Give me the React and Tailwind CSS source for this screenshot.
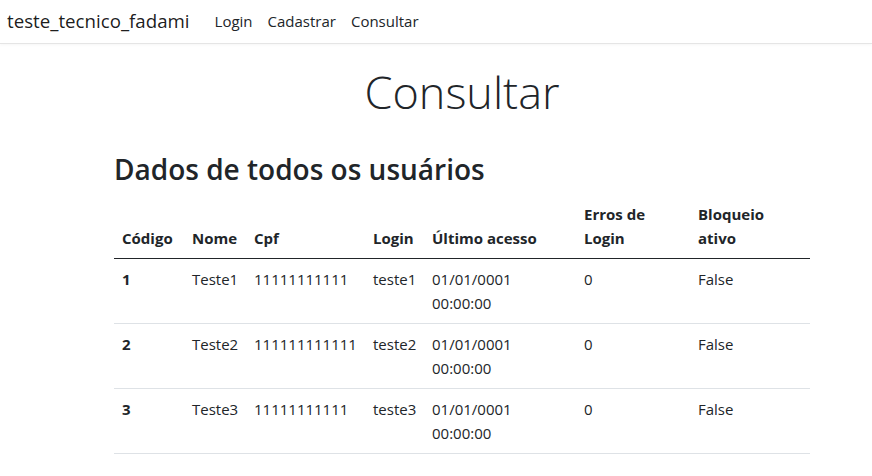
const usuarios = [
  { codigo: 1, nome: 'Teste1', cpf: '11111111111', login: 'teste1', data: '01/01/0001', hora: '00:00:00', erros: 0, bloqueio: 'False' },
  { codigo: 2, nome: 'Teste2', cpf: '111111111111', login: 'teste2', data: '01/01/0001', hora: '00:00:00', erros: 0, bloqueio: 'False' },
  { codigo: 3, nome: 'Teste3', cpf: '11111111111', login: 'teste3', data: '01/01/0001', hora: '00:00:00', erros: 0, bloqueio: 'False' },
];

export default function App() {
  return (
    <div className="min-h-screen bg-white text-[#212529]" style={{ fontFamily: '"Segoe UI", "Open Sans", "Noto Sans", sans-serif' }}>
      <header className="mb-4 border-b border-[#e5e5e5] shadow-[0_1px_3px_rgba(0,0,0,0.04)]">
        <nav className="flex h-[43px] items-center px-[7px]">
          <a className="mr-[25px] text-[18.7px] text-black/90">teste_tecnico_fadami</a>
          <ul className="flex items-center gap-[15px] text-[15px] text-[#212529]">
            <li>Login</li>
            <li>Cadastrar</li>
            <li>Consultar</li>
          </ul>
        </nav>
      </header>

      <main className="ml-[114px] w-[696px] pt-[5px] pb-4">
        <h1 className="mb-[33px] text-center text-[45px] leading-[54px] font-light">Consultar</h1>
        <h3 className="mb-[8px] text-[28px] leading-[34px] font-semibold">Dados de todos os usuários</h3>
        <table className="w-full table-fixed border-collapse text-[15px] leading-[24px]">
          <colgroup>
            <col className="w-[70px]" />
            <col className="w-[62px]" />
            <col className="w-[119px]" />
            <col className="w-[59px]" />
            <col className="w-[152px]" />
            <col className="w-[114px]" />
            <col />
          </colgroup>
          <thead>
            <tr className="border-b border-[#212529] text-left align-bottom font-bold">
              <th className="p-2">Código</th>
              <th className="p-2">Nome</th>
              <th className="p-2">Cpf</th>
              <th className="p-2">Login</th>
              <th className="p-2 whitespace-nowrap">Último acesso</th>
              <th className="p-2">Erros de<br />Login</th>
              <th className="p-2">Bloqueio<br />ativo</th>
            </tr>
          </thead>
          <tbody>
            {usuarios.map((u) => (
              <tr key={u.codigo} className="border-b border-[#dee2e6] align-top">
                <td className="p-2 font-bold">{u.codigo}</td>
                <td className="p-2">{u.nome}</td>
                <td className="p-2 whitespace-nowrap">{u.cpf}</td>
                <td className="p-2">{u.login}</td>
                <td className="p-2">{u.data}<br />{u.hora}</td>
                <td className="p-2">{u.erros}</td>
                <td className="p-2">{u.bloqueio}</td>
              </tr>
            ))}
          </tbody>
        </table>
      </main>
    </div>
  );
}
